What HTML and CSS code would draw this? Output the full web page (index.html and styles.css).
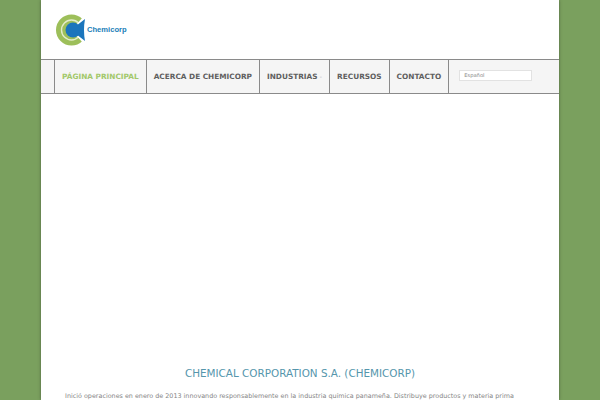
FILE: index.html
```html
<!DOCTYPE html>
<html lang="es">

<head>
    <meta charset="utf-8">
    <link rel="stylesheet" href="styles.css">
    <title>Chemicorp</title>
</head>

<body>
    <div class="page">
        <div class="header">
            <div class="logo">
                <svg width="32" height="32" viewBox="0 0 32 32">
                    <circle cx="15.5" cy="16" r="15.5" fill="#9dbf5a"></circle>
                    <circle cx="15.5" cy="16" r="10" fill="none" stroke="#e4eccb" stroke-width="1.4"></circle>
                    <path d="M15.5 16 L27 3 L32 3 L32 29 L27 29 Z" fill="#fff"></path>
                    <circle cx="17" cy="16" r="7.5" fill="#1b75bc"></circle>
                    <path d="M20 12 L29 5 Q27 16 29 27 L20 20 Z" fill="#1b75bc"></path>
                </svg>
                <span class="logo-name">Chemicorp</span>
            </div>
        </div>
        <div class="nav">
            <a class="nav-item active">PÁGINA PRINCIPAL</a>
            <a class="nav-item">ACERCA DE CHEMICORP</a>
            <a class="nav-item">INDUSTRIAS <span class="caret">-</span></a>
            <a class="nav-item">RECURSOS</a>
            <a class="nav-item">CONTACTO</a>
            <div class="lang">
                <div class="lang-select">Español</div>
            </div>
        </div>
        <div class="content">
            <h1 class="title">CHEMICAL CORPORATION S.A. (CHEMICORP)</h1>
            <p class="intro">Inició operaciones en enero de 2013 innovando responsablemente en la industria química panameña. Distribuye productos y materia prima</p>
        </div>
    </div>
</body>

</html>
```

FILE: styles.css
```css
* {
    margin: 0;
    padding: 0;
    box-sizing: border-box;
}

html,
body {
    height: 400px;
    overflow: hidden;
}

body {
    background-color: #7aa05e;
    background-image: radial-gradient(#80a665 0.6px, transparent 0.7px);
    background-size: 2px 2px;
    font-family: 'DejaVu Sans', sans-serif;
}

.page {
    width: 518px;
    height: 400px;
    margin-left: 41px;
    background-color: white;
    box-shadow: 0 0 3px rgba(60, 70, 50, 0.7);
    overflow: hidden;
}

.header {
    height: 59px;
    padding: 14px 0 0 15px;
}

.logo {
    display: flex;
    align-items: center;
}

.logo-name {
    font-family: 'Liberation Sans', sans-serif;
    font-size: 7.6px;
    font-weight: bold;
    color: #2180b8;
    margin: 0 0 2px -1px;
}

.nav {
    height: 35px;
    display: flex;
    padding-left: 13px;
    background-color: #f5f5f5;
    border-top: 1px solid #8a8a8a;
    border-bottom: 1px solid #8a8a8a;
}

.nav-item {
    display: flex;
    align-items: center;
    gap: 2px;
    padding: 0 7px;
    font-size: 7.35px;
    font-weight: bold;
    color: #5f5f5f;
    white-space: nowrap;
    border-left: 1px solid #8a8a8a;
}

.nav-item.active {
    color: #a2c86a;
}

.caret {
    color: #bbb;
    font-weight: normal;
    font-size: 7px;
}

.lang {
    display: flex;
    align-items: center;
    padding-left: 10px;
    border-left: 1px solid #8a8a8a;
}

.lang-select {
    width: 73px;
    height: 11px;
    margin-bottom: 2px;
    padding-left: 4px;
    background-color: white;
    border: 1px solid #e2e2e2;
    font-size: 5.2px;
    line-height: 9px;
    color: #888;
}

.content {
    padding: 272px 24px 0;
}

.title {
    font-size: 10.4px;
    font-weight: normal;
    line-height: 14px;
    text-align: center;
    color: #5596ac;
}

.intro {
    margin-top: 10px;
    font-size: 6.4px;
    line-height: 12px;
    color: #858585;
    white-space: nowrap;
}
```
